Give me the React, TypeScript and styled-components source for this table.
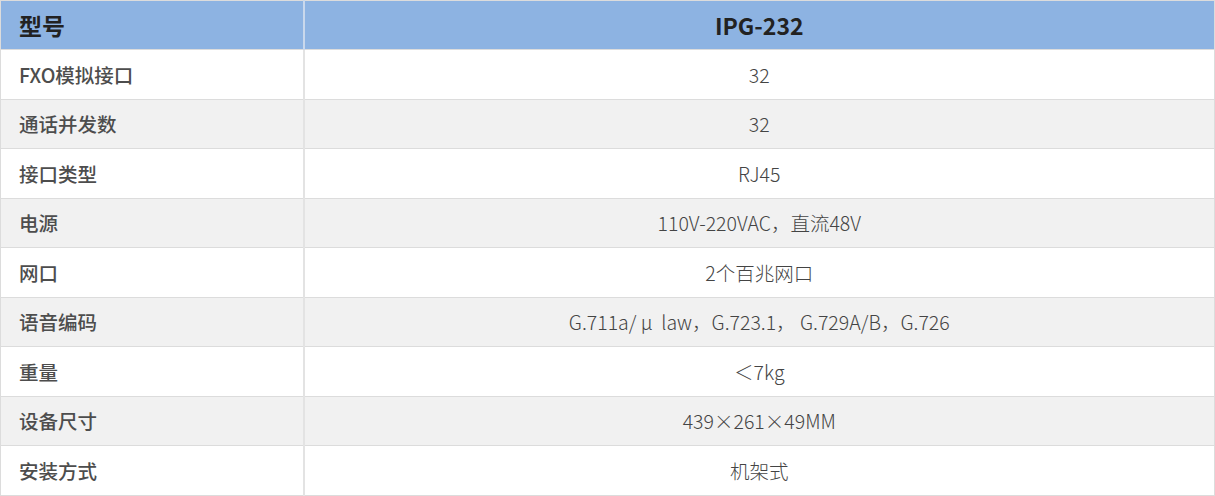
import React, { FC } from 'react';
import styled, { createGlobalStyle } from 'styled-components';

const GlobalStyle = createGlobalStyle`
  html, body {
    margin: 0;
    padding: 0;
    background: #fff;
  }
  body {
    font-family: "Noto Sans CJK SC", "Noto Sans", sans-serif;
  }
`;

const SpecTable = styled.table`
  width: 1215px;
  border-collapse: collapse;
  table-layout: fixed;
  border: 1px solid #dcdcdc;
`;

const HeadRow = styled.tr`
  height: 49px;
  background: #8db3e2;
`;

const Row = styled.tr<{ $striped: boolean }>`
  height: 49.5px;
  background: ${ p => p.$striped ? '#f1f1f1' : '#ffffff' };
`;

const LabelCell = styled.td<{ $head?: boolean }>`
  width: 303px;
  padding: 0 0 0 18px;
  box-sizing: border-box;
  border-bottom: 1px solid #dcdcdc;
  border-right: 2px solid ${ p => p.$head ? '#c9d8ec' : '#e3e3e3' };
  font-size: ${ p => p.$head ? '23px' : '19.5px' };
  font-weight: ${ p => p.$head ? 700 : 500 };
  color: ${ p => p.$head ? '#222' : '#4d4d4d' };
  text-align: left;
  vertical-align: middle;
  white-space: nowrap;
`;

const ValueCell = styled.td<{ $head?: boolean }>`
  padding: 0;
  border-bottom: 1px solid #dcdcdc;
  font-size: ${ p => p.$head ? '23px' : '19.5px' };
  font-weight: ${ p => p.$head ? 700 : 300 };
  color: ${ p => p.$head ? '#222' : '#444' };
  text-align: center;
  vertical-align: middle;
  white-space: pre;
`;

const specs: [string, string][] = [
	[ 'FXO模拟接口', '32' ],
	[ '通话并发数', '32' ],
	[ '接口类型', 'RJ45' ],
	[ '电源', '110V-220VAC，直流48V' ],
	[ '网口', '2个百兆网口' ],
	[ '语音编码', 'G.711a/ μ  law，G.723.1， G.729A/B，G.726' ],
	[ '重量', '＜7kg' ],
	[ '设备尺寸', '439×261×49MM' ],
	[ '安装方式', '机架式' ],
];

const App: FC = () => {
	return (
		<>
			<GlobalStyle />
			<SpecTable>
				<tbody>
					<HeadRow>
						<LabelCell $head>型号</LabelCell>
						<ValueCell $head>IPG-232</ValueCell>
					</HeadRow>
					{ specs.map(([ label, value ], i) => (
						<Row key={ label } $striped={ i % 2 === 1 }>
							<LabelCell>{ label }</LabelCell>
							<ValueCell>{ value }</ValueCell>
						</Row>
					)) }
				</tbody>
			</SpecTable>
		</>
	);
};

export default App;
